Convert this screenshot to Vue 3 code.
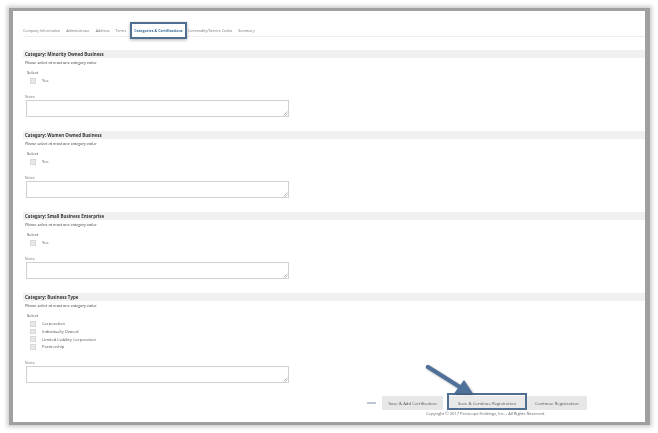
<template>
  <div class="page">
    <div class="frame">
      <div class="content">
        <nav class="tabs">
          <span
            v-for="tab in tabs"
            :key="tab"
            class="tab"
            :class="{ active: tab === activeTab }"
          >{{ tab }}</span>
        </nav>

        <section v-for="cat in categories" :key="cat.name" class="category">
          <h3 class="category-title">Category: {{ cat.name }}</h3>
          <p class="hint">Please select at most one category value</p>
          <div class="select-label">Select</div>
          <div v-for="opt in cat.options" :key="opt" class="option">
            <span class="checkbox"></span>
            <span>{{ opt }}</span>
          </div>
          <label class="notes-label">Notes:</label>
          <div class="notes">
            <svg class="grip" width="5" height="5" viewBox="0 0 5 5">
              <path d="M0.5 4.5L4.5 0.5M2.5 4.5L4.5 2.5" stroke="#888" stroke-width="0.6" />
            </svg>
          </div>
        </section>

        <div class="actions">
          <span class="dash"></span>
          <button class="btn first">Save &amp; Add Certification</button>
          <button class="btn highlighted">Save &amp; Continue Registration</button>
          <button class="btn">Continue Registration</button>
        </div>
        <div class="copyright">Copyright © 2017 Periscope Holdings, Inc. - All Rights Reserved.</div>

        <svg class="arrow" width="60" height="44" viewBox="0 0 60 44">
          <path d="M3 3L38 25" stroke="#4f7199" stroke-width="4.4" stroke-linecap="round" />
          <path d="M39 16L48 29.5L29 29.5Z" fill="#4f7199" />
        </svg>
      </div>
    </div>
  </div>
</template>

<script setup>
const tabs = [
  'Company Information',
  'Administrator',
  'Address',
  'Terms',
  'Categories & Certifications',
  'Commodity/Service Codes',
  'Summary'
]
const activeTab = 'Categories & Certifications'

const categories = [
  { name: 'Minority Owned Business', options: ['Yes'] },
  { name: 'Women Owned Business', options: ['Yes'] },
  { name: 'Small Business Enterprise', options: ['Yes'] },
  {
    name: 'Business Type',
    options: ['Corporation', 'Individually Owned', 'Limited Liability Corporation', 'Partnership']
  }
]
</script>

<style>
html,
body {
  margin: 0;
  background: #fff;
}
</style>

<style scoped>
.page {
  width: 658px;
  height: 433px;
  padding: 8px 8px 8px 9px;
  box-sizing: border-box;
  overflow: hidden;
  font-family: "Open Sans", "Liberation Sans", sans-serif;
  color: #555;
}

.frame {
  height: 417px;
  border: 4px solid #a0a0a0;
  border-top-width: 3px;
  border-right-width: 5px;
  border-bottom-width: 3px;
  background: #fff;
  box-shadow: 0 0 4px 2px rgba(0, 0, 0, 0.2);
  box-sizing: border-box;
}

.content {
  position: relative;
  height: 100%;
  padding-top: 14px;
  filter: blur(0.45px);
}

.tabs {
  display: flex;
  align-items: center;
  gap: 6px;
  height: 10px;
  margin-left: 10px;
  padding-bottom: 1px;
  border-bottom: 1px solid #eee;
  margin-bottom: 13px;
  font-size: 3.65px;
  color: #777;
}

.tab {
  white-space: nowrap;
}

.tab.active {
  padding: 4px 2px;
  margin: 0 -3px 0 0;
  font-weight: 700;
  color: #3b6c9b;
  background: #fff;
  outline: 2px solid #4f6f90;
  box-shadow: 0 1px 3px 2px rgba(0, 0, 0, 0.3);
}

.category {
  height: 81px;
  padding-left: 10px;
  box-sizing: border-box;
}

.category-title {
  margin: 0;
  height: 8px;
  line-height: 8px;
  padding-left: 2px;
  background: #f0f0f0;
  font-size: 4.45px;
  font-weight: 700;
  color: #333;
}

.hint {
  margin: 1px 0 0 2px;
  height: 8px;
  line-height: 8px;
  font-size: 4.05px;
  font-style: italic;
  color: #444;
}

.select-label {
  margin: 2px 0 0 4px;
  height: 8px;
  line-height: 8px;
  font-size: 4.1px;
  color: #444;
}

.option {
  display: flex;
  align-items: center;
  gap: 6.5px;
  height: 7.7px;
  margin-left: 7px;
  font-size: 4.1px;
  color: #555;
}

.checkbox {
  width: 3.5px;
  height: 3.5px;
  border: 0.5px solid #d8d8d8;
  background: #e8e8e8;
}

.notes-label {
  display: block;
  margin: 9px 0 0 2px;
  height: 6px;
  line-height: 6px;
  font-size: 3.4px;
  color: #777;
}

.notes {
  position: relative;
  width: 261px;
  height: 15px;
  margin-left: 3px;
  border: 1px solid #d0d0d0;
}

.grip {
  position: absolute;
  right: 0;
  bottom: 0;
}

.actions {
  position: absolute;
  left: 354px;
  top: 385px;
  display: flex;
  align-items: center;
}

.dash {
  width: 9px;
  height: 1.5px;
  margin-right: 6px;
  background: #bcc7d2;
}

.btn {
  height: 14px;
  padding: 0;
  border: 0;
  border-radius: 1px;
  background: #e7e7e7;
  font-family: inherit;
  font-size: 4.3px;
  color: #555;
  width: 60px;
}

.btn.first {
  width: 61px;
  margin-right: 4px;
}

.btn.highlighted {
  position: relative;
  width: 80px;
  background: #e9e9e9;
}

.btn.highlighted::after {
  content: "";
  position: absolute;
  inset: -3px 0 0 0;
  border: 2px solid #4f6f90;
}

.copyright {
  position: absolute;
  left: 413px;
  top: 400px;
  font-size: 4.05px;
  line-height: 6px;
  white-space: nowrap;
  color: #666;
}

.arrow {
  position: absolute;
  left: 412px;
  top: 353px;
  filter: drop-shadow(1px 1px 1px rgba(0, 0, 0, 0.3));
}
</style>
